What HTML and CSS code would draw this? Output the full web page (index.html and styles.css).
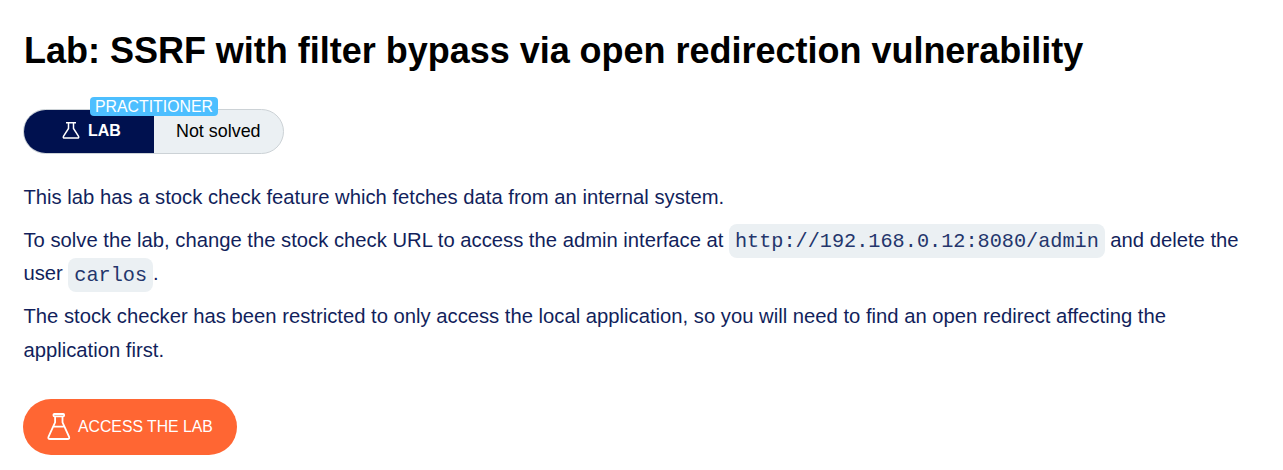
FILE: index.html
```html
<!DOCTYPE html>
<html lang="en">
<head>
<meta charset="utf-8">
<title>Lab: SSRF with filter bypass via open redirection vulnerability</title>
<link rel="stylesheet" href="styles.css">
</head>
<body>
<main class="page">
  <h1 class="title">Lab: SSRF with filter bypass via open redirection vulnerability</h1>
  <div class="status">
    <span class="level">PRACTITIONER</span>
    <div class="status-lab">
      <svg class="flask-small" viewBox="0 0 18 18"><path d="M4 .7h10M6.5.7v5.800L1.600 14.200q-.9 1.800 1 1.800h12.800q1.900 0 1-1.800L11.500 6.500V.7"/></svg>
      <span>LAB</span>
    </div>
    <div class="status-text">Not solved</div>
  </div>
  <div class="description">
    <p>This lab has a stock check feature which fetches data from an internal system.</p>
    <p>To solve the lab, change the stock check URL to access the admin interface at <code>http://192.168.0.12:8080/admin</code> and delete the user <code>carlos</code>.</p>
    <p>The stock checker has been restricted to only access the local application, so you will need to find an open redirect affecting the application first.</p>
  </div>
  <a class="button">
    <svg class="flask-large" viewBox="0 0 24 28"><path d="M7.300 1h9q.8 0 .8.8v.7q0 .8-.8.8H7.300q-.8 0-.8-.8V1.800q0-.8.8-.8zM8.100 3.300v6L1.600 23.700q-1 2.300 1.500 2.300h17.400q2.500 0 1.500-2.300L15.500 9.300v-6M6 13.700h11.600"/></svg>
    <span>ACCESS THE LAB</span>
  </a>
</main>
</body>
</html>
```
FILE: styles.css
```css
body { margin: 0; background: #fff; color: #121f5c; font-family: "Liberation Sans", Arial, sans-serif; }
.page { padding: 29px 24px 0; }
.title { margin: 0; color: #000; font-size: 36px; line-height: 44px; letter-spacing: -0.015px; white-space: nowrap; }
.status { position: relative; display: flex; box-sizing: border-box; width: 261px; height: 45px; margin: 36px 0 0 -1px; border: 1px solid #ccd2d6; border-radius: 23px; background: #ebf0f3; }
.status-lab { display: flex; box-sizing: border-box; width: 130px; padding: 0 0 2px 38px; gap: 8px; align-items: center; border-radius: 22px 0 0 22px; background: #00114f; color: #fff; font-size: 16px; font-weight: bold; }
.status-text { padding: 11px 0 0 22px; color: #000; font-size: 17.9px; line-height: 20px; }
.level { position: absolute; left: 66px; top: -13px; width: 128px; height: 19px; border-radius: 4px; background: #4dbfff; color: #fff; font-size: 15.85px; line-height: 20px; text-align: center; }
.flask-small { width: 18px; height: 18px; fill: none; stroke: #fff; stroke-width: 1.5; }
.description { margin-top: 27px; font-size: 20.24px; line-height: 33.6px; }
.description p { margin: 0 0 9.2px -0.5px; }
code { padding: 5.5px 5.8px; border-radius: 8px; background: #ebf0f3; color: #24366c; font-family: "Liberation Mono", monospace; font-size: 20.23px; line-height: 1; }
.button { display: flex; box-sizing: border-box; width: 214px; height: 56px; margin: 31.4px 0 0 -1px; padding-left: 24px; gap: 7px; align-items: center; border-radius: 28px; background: #ff6633; color: #fff; font-size: 15.8px; }
.flask-large { width: 24px; height: 28px; fill: none; stroke: #fff; stroke-width: 1.8; }
```
